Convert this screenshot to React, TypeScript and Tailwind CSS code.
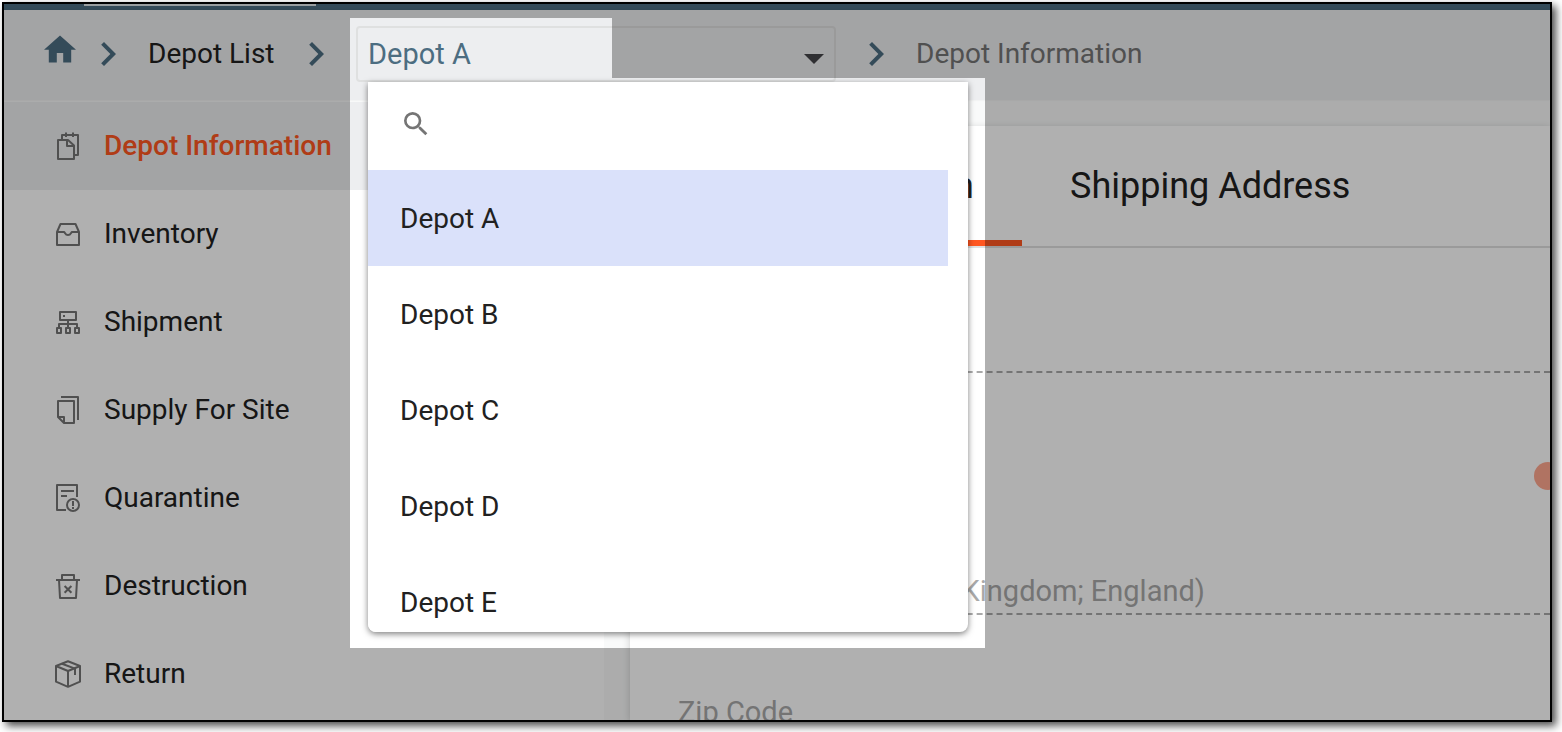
import { useState, type ReactNode } from "react";

const depots = ["Depot A", "Depot B", "Depot C", "Depot D", "Depot E"];

function Chevron() {
  return (
    <svg viewBox="0 0 24 24" className="size-12 shrink-0 fill-[#4c6d81]" aria-hidden="true">
      <path d="M10 6 8.59 7.41 13.17 12l-4.58 4.59L10 18l6-6z" />
    </svg>
  );
}

function NavIcon({ children }: { children: ReactNode }) {
  return (
    <svg
      viewBox="0 0 32 32"
      className="size-8 shrink-0 fill-none stroke-[#757575] stroke-2"
      strokeLinejoin="round"
      aria-hidden="true"
    >
      {children}
    </svg>
  );
}

const navItems: { label: string; icon: ReactNode }[] = [
  {
    label: "Depot Information",
    icon: (
      <>
        <path d="M6 10H16L22 15.5V29H6z" />
        <path d="M15 10V16H22" />
        <path d="M10 10V5H26V25H22M14 2.5v4.5M21 2.5v4.5" />
      </>
    ),
  },
  {
    label: "Inventory",
    icon: (
      <>
        <path d="M5 14 8.5 6H23.5L27 14V27H5Z" />
        <path d="M5 14H12C13 14 13 17 16 17S19 14 20 14H27" />
      </>
    ),
  },
  {
    label: "Shipment",
    icon: (
      <>
        <path d="M8 6H24V14H8ZM16 14V22M7 22V18H25V22" />
        <path d="M5 22H9V27H5ZM14 22H18V27H14ZM23 22H27V27H23Z" />
        <path d="M11 10H13" />
      </>
    ),
  },
  {
    label: "Supply For Site",
    icon: (
      <>
        <path d="M6 7H22V29H12L6 23Z" />
        <path d="M6 23H12V29M9 3H26V26" />
      </>
    ),
  },
  {
    label: "Quarantine",
    icon: (
      <>
        <path d="M14 28H5V3H25V15M9 9H22M9 14H15" />
        <circle cx="21" cy="23" r="6" />
        <path d="M21 19V24M21 25V27" />
      </>
    ),
  },
  {
    label: "Destruction",
    icon: (
      <>
        <path d="M4 10H28M10 9V5H22V9M7 10 8 28H24L25 10" />
        <path d="M12.6 16 19.4 22.8M19.4 16 12.6 22.8" />
      </>
    ),
  },
  {
    label: "Return",
    icon: (
      <>
        <path d="M16 3.3 28 8V23.7L16 28.8 4 23.7V8ZM4 8 16 13 28 8M16 13V28.8" />
        <path d="M10 5.7 23 10.6V17" />
      </>
    ),
  },
];

function DepotPicker() {
  const [selected, setSelected] = useState("Depot A");
  return (
    <div className="relative w-[480px] shrink-0">
      <select
        aria-label="Depot"
        value={selected}
        onChange={(e) => setSelected(e.target.value)}
        className="block h-14 w-full appearance-none rounded-sm border-2 border-[#dfe0e0] bg-transparent pt-[2px] pl-[10px] text-[29px] text-[#4c6d81]"
      >
        {depots.map((d) => (
          <option key={d}>{d}</option>
        ))}
      </select>
      <svg viewBox="0 0 20 10" className="pointer-events-none absolute top-7 right-3 h-[10px] w-5 fill-[#444549]" aria-hidden="true">
        <path d="M0 0h20L10 10z" />
      </svg>
      <div className="absolute top-full left-3 z-10 max-h-[550px] w-[600px] overflow-hidden rounded-b-lg bg-white shadow-[0_2px_6px_rgba(0,0,0,0.5)]">
        <label className="flex h-[88px] items-center px-8 pb-1">
          <svg viewBox="0 0 24 24" className="size-8 shrink-0 fill-[#757575]" aria-hidden="true">
            <path d="M15.5 14h-.79l-.28-.27A6.47 6.47 0 0 0 16 9.5 6.5 6.5 0 1 0 9.5 16c1.61 0 3.09-.59 4.23-1.57l.27.28v.79l5 4.99L20.49 19zm-6 0a4.5 4.5 0 1 1 0-9 4.5 4.5 0 0 1 0 9" />
          </svg>
          <input type="search" aria-label="Search depots" className="ml-4 h-12 flex-1 text-[28px] outline-none" />
        </label>
        <ul role="listbox" aria-label="Depots" className="pr-5">
          {depots.map((d) => (
            <li key={d} role="option" aria-selected={d === selected}>
              <button
                type="button"
                onClick={() => setSelected(d)}
                className={`block h-24 w-full px-8 pt-[2px] text-left text-[28px] text-[#212121] ${d === selected ? "bg-[#dae1fa]" : "bg-white"}`}
              >
                {d}
              </button>
            </li>
          ))}
        </ul>
      </div>
    </div>
  );
}

export default function App() {
  return (
    <div className="h-screen bg-white pt-[2px] pr-[10px] pb-[10px] pl-[2px] font-[Roboto,sans-serif] text-[28px] text-[#212121]">
      <div className="relative flex h-full flex-col overflow-hidden border-2 border-black bg-[#f9fafa] shadow-[4px_4px_8px_rgba(0,0,0,0.7)]">
        <div className="h-[6px] shrink-0 bg-[#4c6d81] pl-20">
          <div className="h-[2px] w-[232px] bg-[#dfe6ea]" />
        </div>

        <header className="relative z-10 flex h-[90px] shrink-0 items-start bg-[#edeef0] pt-4 pl-10 shadow-[0_0_2px_rgba(0,0,0,0.08)]">
          <nav aria-label="Breadcrumb" className="flex h-14 items-center gap-4">
            <div className="flex items-center gap-2">
              <a href="#home" aria-label="Home" className="pb-[10px]">
                <svg viewBox="2 3 20 17" className="h-7 w-8 fill-[#4c6d81]" aria-hidden="true">
                  <path d="M10 20v-6h4v6h5v-8h3L12 3 2 12h3v8z" />
                </svg>
              </a>
              <Chevron />
            </div>
            <a href="#depots" className="min-w-32 whitespace-nowrap">Depot List</a>
            <Chevron />
            <DepotPicker />
            <Chevron />
            <span className="whitespace-nowrap text-[#757575]">Depot Information</span>
          </nav>
        </header>

        <div className="flex min-h-0 flex-1">
          <aside className="w-[600px] shrink-0 pt-[2px]">
            <nav aria-label="Depot sections" className="h-full bg-white">
              {navItems.map(({ label, icon }, i) => (
                <a
                  key={label}
                  href={`#${label}`}
                  className={`flex h-[88px] items-center gap-5 pl-12 ${i === 0 ? "bg-[#edeef0] font-medium text-[#ff5722]" : ""}`}
                >
                  <NavIcon>{icon}</NavIcon>
                  {label}
                </a>
              ))}
            </nav>
          </aside>

          <main className="min-w-0 flex-1 pt-[26px] pl-[26px]">
            <div className="h-full bg-white shadow-[0_2px_8px_rgba(0,0,0,0.18)]">
              <div role="tablist" className="flex h-[122px] border-b-2 border-[#e0e0e0] text-[36px]">
                <button type="button" role="tab" aria-selected="true" className="w-[392px] border-b-[6px] border-[#ff5722] pt-[6px] pr-12 text-right">
                  Depot Information
                </button>
                <button type="button" role="tab" aria-selected="false" className="border-b-[6px] border-transparent px-12 pt-[6px]">
                  Shipping Address
                </button>
              </div>
              <div className="pl-12 text-[29px] text-[#a9a9a9]">
                <div className="h-[125px] border-b-2 border-dashed border-[#a9a9a9]" />
                <div className="flex h-[121px] items-end justify-end">
                  <input type="checkbox" role="switch" aria-label="Active" className="-mr-3 mb-1 size-7 appearance-none rounded-full bg-[#ffa78f]" />
                </div>
                <div className="flex h-[121px] items-end border-b-2 border-dashed border-[#a9a9a9]">
                  Country / City (United Kingdom; England)
                </div>
                <div className="flex h-[121px] items-end pb-[2px]">Zip Code</div>
              </div>
            </div>
          </main>
        </div>

        <div className="pointer-events-none absolute inset-0 z-20 bg-black/31 [clip-path:polygon(evenodd,0_0,100%_0,100%_100%,0_100%,0_0,346px_14px,608px_14px,608px_74px,981px_74px,981px_644px,346px_644px,346px_14px,0_0)]" />
      </div>
    </div>
  );
}
